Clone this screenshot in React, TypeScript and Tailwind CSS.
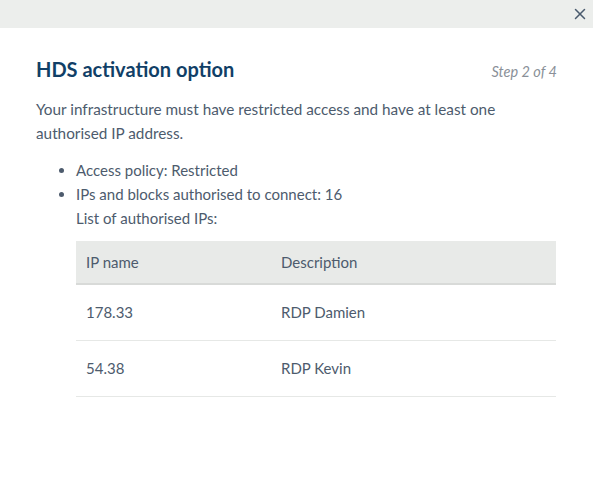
import { X } from 'lucide-react'

const rows = [
  { ip: '178.33', description: 'RDP Damien' },
  { ip: '54.38', description: 'RDP Kevin' }
]

export default function App() {
  return (
    <div className="h-[481px] w-[593px] bg-white font-['Lato',sans-serif] text-[#4d5b6d]">
      <div className="flex h-[28px] items-center justify-end bg-[#eceeec] pr-[1px]">
        <button aria-label="Close" className="flex h-6 w-6 items-center justify-center text-[#4a5b6e]">
          <X size={18} strokeWidth={2} />
        </button>
      </div>

      <div className="px-[36px] pt-[26px]">
        <div className="flex items-baseline justify-between">
          <h2 className="text-[20px] font-bold text-[#113f67]">HDS activation option</h2>
          <span className="text-[14.5px] italic text-[#8a9098]">Step 2 of 4</span>
        </div>

        <p className="mt-[13px] text-[15.3px] leading-[24px]">
          Your infrastructure must have restricted access and have at least one authorised IP address.
        </p>

        <ul className="mt-[13px] list-disc pl-[40px] text-[15px] leading-[24px] marker:text-[#4d5b6d]">
          <li>Access policy: Restricted</li>
          <li>
            IPs and blocks authorised to connect: 16
            <div>List of authorised IPs:</div>
          </li>
        </ul>

        <table className="mt-[11px] ml-[40px] w-[480px] text-[15px]">
          <thead>
            <tr className="h-[43px] border-b-2 border-[#d8dad8] bg-[#e8eae8] text-left">
              <th className="w-[205px] pl-[10px] font-normal">IP name</th>
              <th className="font-normal">Description</th>
            </tr>
          </thead>
          <tbody>
            {rows.map((r) => (
              <tr key={r.ip} className="h-[56px] border-b border-[#e6e8e6]">
                <td className="pl-[10px]">{r.ip}</td>
                <td>{r.description}</td>
              </tr>
            ))}
          </tbody>
        </table>
      </div>
    </div>
  )
}
